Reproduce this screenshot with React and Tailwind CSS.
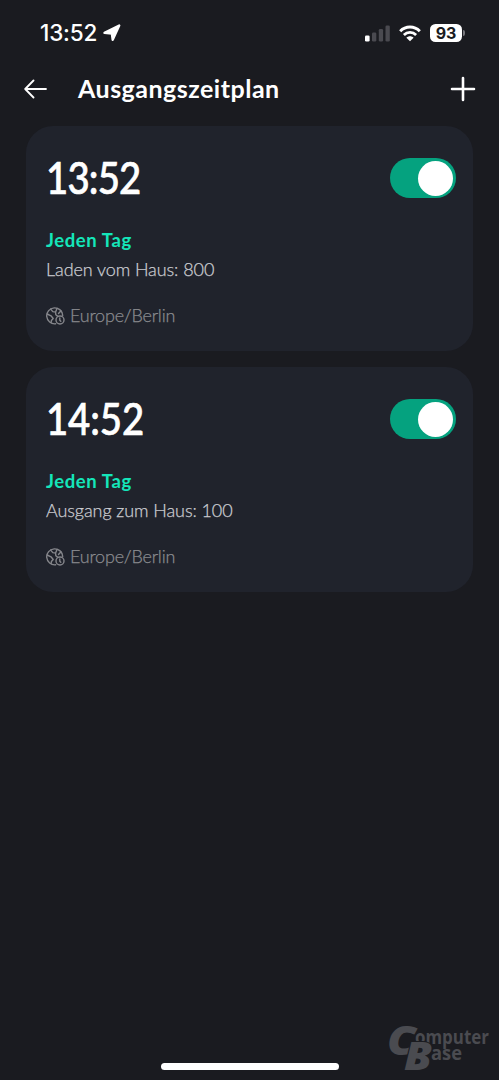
import { useState } from "react";

const initialSchedules = [
  { time: "13:52", action: "Laden vom Haus: 800", spacing: "tracking-[-0.9px]" },
  { time: "14:52", action: "Ausgang zum Haus: 100", spacing: "tracking-[-0.1px]" },
];

function StatusBar() {
  return (
    <div className="flex h-[66px] items-center justify-between pl-[40px] pr-[34px]">
      <div className="flex items-center gap-[6px]">
        <span className="pt-px font-['Inter',sans-serif] text-[22.5px] font-medium leading-none tracking-[-0.2px]">
          13:52
        </span>
        <svg width="18" height="18" viewBox="0 0 18 18" fill="currentColor" stroke="currentColor" strokeLinejoin="round">
          <path d="M16.200 1.500L9.700 15.800 8.900 9.600 1.500 8.800z" strokeWidth="2.400" />
        </svg>
      </div>
      <div className="flex items-center">
        <svg width="25" height="17" viewBox="0 0 25 17">
          <rect x="0" y="10.500" width="4.600" height="6" rx="1.300" fill="#fff" />
          <rect x="7" y="7.500" width="4.300" height="9" rx="1.300" fill="#4a4a50" />
          <rect x="13.800" y="4" width="4.300" height="12.500" rx="1.300" fill="#4a4a50" />
          <rect x="20.500" y="0.500" width="4.300" height="16" rx="1.300" fill="#4a4a50" />
        </svg>
        <svg className="ml-[9px]" width="22" height="17" viewBox="0 0 22 17" fill="none" stroke="#fff">
          <path d="M1.200 6.200C6.700.7 15.300.7 20.800 6.200" strokeWidth="3" />
          <path d="M4.900 10C8.300 6.600 13.700 6.600 17.100 10" strokeWidth="2.800" />
          <path d="M7.400 12.700c2-2 5.200-2 7.200 0L11 16.300z" fill="#fff" stroke="none" />
        </svg>
        <div className="ml-[9px] flex h-[18px] w-[32px] items-center justify-center rounded-[5.500px] bg-white font-['Inter',sans-serif] text-[16px] font-bold leading-[18px] text-[#1a1b20]">
          93
        </div>
        <div className="ml-px h-[6px] w-[2px] rounded-r-full bg-[#77777c]" />
      </div>
    </div>
  );
}

function Header() {
  return (
    <header className="flex h-[60px] items-center pb-[15px] pl-[24px] pr-[23px]">
      <button type="button" aria-label="Zurück">
        <svg
          width="23"
          height="20"
          viewBox="0 0 23 20"
          fill="none"
          stroke="#fff"
          strokeWidth="1.800"
          strokeLinecap="round"
          strokeLinejoin="round"
        >
          <path d="M22 10H1.500M9.500 1.500L1.200 10l8.300 8.500" />
        </svg>
      </button>
      <h1 className="ml-[31px] text-[25px] font-bold leading-none tracking-[0.5px]">
        Ausgangszeitplan
      </h1>
      <button type="button" aria-label="Hinzufügen" className="ml-auto">
        <svg
          width="26"
          height="26"
          viewBox="0 0 26 26"
          fill="none"
          stroke="#fff"
          strokeWidth="2.600"
          strokeLinecap="round"
        >
          <path d="M13 2v22M2 13h22" />
        </svg>
      </button>
    </header>
  );
}

function Toggle({ on, onClick }) {
  return (
    <button
      type="button"
      role="switch"
      aria-checked={on}
      onClick={onClick}
      className={`flex h-[40px] w-[66px] items-center rounded-full px-[3px] ${
        on ? "justify-end bg-[#05a27f]" : "justify-start bg-[#4a4a50]"
      }`}
    >
      <span className="size-[35px] rounded-full bg-white" />
    </button>
  );
}

function GlobeIcon() {
  return (
    <svg
      width="19"
      height="18"
      viewBox="0 0 19 18"
      fill="none"
      stroke="currentColor"
      strokeWidth="1.400"
      strokeLinecap="round"
      strokeLinejoin="round"
    >
      <path d="M9.600 16.800A8 8 0 1 1 16.700 8.500" />
      <path d="M1.200 7l3.800 1.800 2.200 2.700-1.800 2-.3 2M4.700 2.100l2.100 2.500 2.800.5.200 2.700 1.500 1.100M11 1.500L9.600 5.100M15 3.800l-2.500 2.700" />
      <circle cx="14" cy="13" r="4" />
      <path d="M13.800 11v2.300l1 1" />
    </svg>
  );
}

function ScheduleCard({ schedule }) {
  const [on, setOn] = useState(true);

  return (
    <div className="rounded-[27px] bg-[#20232c] pb-[20px] pl-[20px] pr-[17px] pt-[32px]">
      <div className="flex h-[40px] items-center justify-between">
        <span
          className={`origin-left scale-x-[0.88] text-[43.500px] font-medium leading-none [-webkit-text-stroke:0.7px_white] ${schedule.spacing}`}
        >
          {schedule.time}
        </span>
        <Toggle on={on} onClick={() => setOn(!on)} />
      </div>
      <p className="mt-[28px] text-[18.500px] font-bold leading-[29px] tracking-[0.6px] text-[#14e6ba]">
        Jeden Tag
      </p>
      <p className="text-[18px] font-light leading-[29px] tracking-[-0.08px] text-[#cbccd1] [-webkit-text-stroke:0.25px_#cbccd1]">
        {schedule.action}
      </p>
      <div className="mt-[17px] flex items-center gap-[5px] pb-px text-[#85868b]">
        <GlobeIcon />
        <span className="text-[18px] font-light leading-[29px] tracking-[-0.2px] text-[#8a8b8f] [-webkit-text-stroke:0.25px_#8a8b8f]">
          Europe/Berlin
        </span>
      </div>
    </div>
  );
}

function Watermark() {
  return (
    <svg
      className="absolute bottom-0 right-0 font-['Open_Sans',sans-serif] font-bold"
      width="129"
      height="70"
      viewBox="0 0 129 70"
      fill="#4a4b50"
    >
      <text x="45" y="34" fontSize="20" textLength="74" lengthAdjust="spacingAndGlyphs">
        omputer
      </text>
      <text x="61" y="50" fontSize="20" textLength="31" lengthAdjust="spacingAndGlyphs">
        ase
      </text>
      <text x="17" y="45" fontSize="40" fontStyle="italic" fontWeight="800" textLength="29" lengthAdjust="spacingAndGlyphs">
        C
      </text>
      <text
        x="34"
        y="60"
        fontSize="39"
        fontStyle="italic"
        fontWeight="800"
        textLength="28"
        lengthAdjust="spacingAndGlyphs"
        stroke="#1a1b20"
        strokeWidth="2"
        paintOrder="stroke"
      >
        B
      </text>
    </svg>
  );
}

export default function App() {
  return (
    <div className="relative flex h-[1080px] w-[499px] flex-col overflow-hidden bg-[#1a1b20] font-['Lato',sans-serif] text-white">
      <StatusBar />
      <Header />
      <main className="flex flex-1 flex-col gap-[16px] pl-[26px] pr-[26px]">
        {initialSchedules.map((schedule) => (
          <ScheduleCard key={schedule.time} schedule={schedule} />
        ))}
      </main>
      <Watermark />
      <div className="mb-[10px] ml-[161px] h-[7px] w-[178px] rounded-full bg-white" />
    </div>
  );
}
